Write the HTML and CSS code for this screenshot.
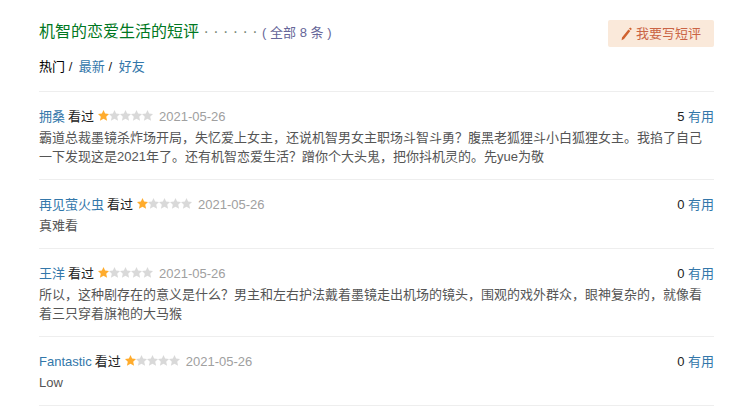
FILE: index.html
```
<!DOCTYPE html>
<html lang="zh-CN">
<head>
  <meta charset="UTF-8">
  <title>机智的恋爱生活的短评</title>
  <link rel="stylesheet" href="styles.css">
</head>
<body>
  <svg class="defs" width="0" height="0">
    <symbol id="star" viewBox="0 0 11 11">
      <path d="M5.5 0 L7.1 3.5 L11 3.9 L8.2 6.7 L9.1 10.8 L5.5 8.8 L1.9 10.8 L2.8 6.7 L0 3.9 L3.9 3.5 Z"/>
    </symbol>
    <symbol id="stars" viewBox="0 0 55 11">
      <use href="#star" x="0" width="11" height="11" fill="#ffac2d"/>
      <use href="#star" x="11" width="11" height="11" fill="#d9d9d9"/>
      <use href="#star" x="22" width="11" height="11" fill="#d9d9d9"/>
      <use href="#star" x="33" width="11" height="11" fill="#d9d9d9"/>
      <use href="#star" x="44" width="11" height="11" fill="#d9d9d9"/>
    </symbol>
  </svg>

  <div class="comments">
    <div class="head">
      <h2>机智的恋爱生活的短评 <span class="dots">· · · · · ·</span> <span class="total">( <a href="#">全部 8 条</a> )</span></h2>
      <a class="write-btn" href="#">
        <svg width="11" height="14" viewBox="0 0 11 14"><path fill="#d0622f" d="M8 1.7 L9.2 0.4 L10.8 1.7 L9.9 3.2 Z M7.4 2.4 L9.3 4 L3 11.9 L0.6 13.3 L1 10.5 Z"/></svg>
        <span>我要写短评</span>
      </a>
    </div>

    <div class="tabs"><span class="on">热门</span> / <a href="#">最新</a> / <a href="#">好友</a></div>

    <div class="item">
      <div class="info">
        <a href="#">拥桑</a><span class="seen">看过</span><svg class="rating"><use href="#stars"/></svg><span class="date">2021-05-26</span>
        <span class="vote">5 <a href="#">有用</a></span>
      </div>
      <p>霸道总裁墨镜杀炸场开局，失忆爱上女主，还说机智男女主职场斗智斗勇？腹黑老狐狸斗小白狐狸女主。我掐了自己<br>一下发现这是2021年了。还有机智恋爱生活？蹭你个大头鬼，把你抖机灵的。先yue为敬</p>
    </div>
    <div class="item">
      <div class="info">
        <a href="#">再见萤火虫</a><span class="seen">看过</span><svg class="rating"><use href="#stars"/></svg><span class="date">2021-05-26</span>
        <span class="vote">0 <a href="#">有用</a></span>
      </div>
      <p>真难看</p>
    </div>
    <div class="item">
      <div class="info">
        <a href="#">王洋</a><span class="seen">看过</span><svg class="rating"><use href="#stars"/></svg><span class="date">2021-05-26</span>
        <span class="vote">0 <a href="#">有用</a></span>
      </div>
      <p>所以，这种剧存在的意义是什么？男主和左右护法戴着墨镜走出机场的镜头，围观的戏外群众，眼神复杂的，就像看<br>着三只穿着旗袍的大马猴</p>
    </div>
    <div class="item">
      <div class="info">
        <a href="#">Fantastic</a><span class="seen">看过</span><svg class="rating"><use href="#stars"/></svg><span class="date">2021-05-26</span>
        <span class="vote">0 <a href="#">有用</a></span>
      </div>
      <p>Low</p>
    </div>
  </div>
</body>
</html>
```
FILE: styles.css
```
body {
  margin: 0;
  background: #fff;
  font: 13px/19px "Liberation Sans", "Noto Sans CJK SC", sans-serif;
  color: #222;
}

a {
  color: #37a;
  text-decoration: none;
}

.defs {
  display: block;
}

.comments {
  width: 675px;
  padding: 20px 0 0 39px;
}

.head {
  display: flex;
  justify-content: space-between;
  height: 27px;
}

h2 {
  margin: 0;
  font-size: 16px;
  line-height: 24px;
  font-weight: normal;
  color: #007722;
  white-space: nowrap;
}

.dots {
  color: #7a8a7a;
}

.total,
.total a {
  font-size: 13px;
  color: #669;
}

.write-btn {
  display: flex;
  align-items: center;
  justify-content: center;
  gap: 4px;
  width: 106px;
  height: 27px;
  border-radius: 2px;
  background: #fae9da;
  color: #ca6445;
}

.tabs {
  margin-top: 10px;
  padding-bottom: 15px;
  border-bottom: 1px solid #eee;
}

.tabs a {
  margin-left: 3px;
}

.tabs .on {
  color: #000;
}

.item {
  padding: 14px 0 13px;
  border-bottom: 1px solid #eee;
}

.info {
  display: flex;
  align-items: center;
  height: 21px;
  margin-bottom: 1px;
}

.seen {
  margin-left: 3px;
}

.rating {
  width: 55px;
  height: 11px;
  margin: 0 6px 2px 4px;
}

.date {
  color: #a0a0a0;
}

.vote {
  margin-left: auto;
}

.item p {
  margin: 0;
  color: #555;
  white-space: nowrap;
}
```
